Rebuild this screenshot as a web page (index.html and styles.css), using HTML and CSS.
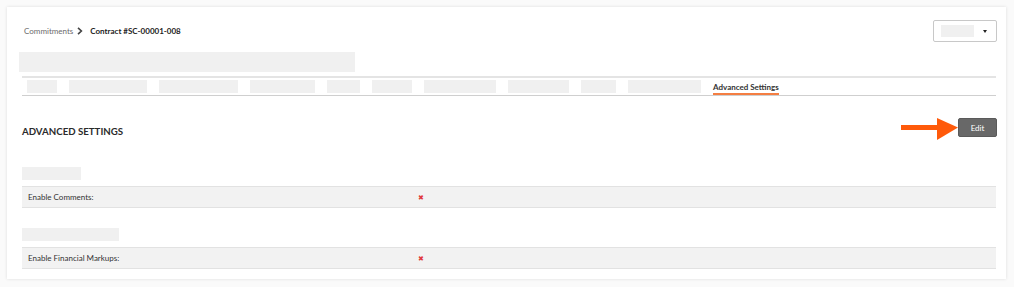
FILE: index.html
```html
<!DOCTYPE html>
<html lang="en">
<head>
    <meta charset="UTF-8">
    <title>Contract #SC-00001-008 - Advanced Settings</title>
    <link rel="stylesheet" href="styles.css">
</head>
<body>
    <div class="card">
        <div class="top-row">
            <div class="breadcrumb">
                <span class="crumb">Commitments</span>
                <svg class="crumb-sep" width="6" height="8" viewBox="0 0 6 8">
                    <path d="M1 0.8 L4.4 4 L1 7.2" fill="none" stroke="#444" stroke-width="1.6"/>
                </svg>
                <span class="crumb current">Contract #SC-00001-008</span>
            </div>
            <div class="dropdown">
                <span class="ph dropdown-ph"></span>
                <span class="caret"></span>
            </div>
        </div>

        <div class="ph title-ph"></div>

        <div class="tabs">
            <span class="ph tab-ph" style="width: 30px"></span>
            <span class="ph tab-ph" style="width: 78px"></span>
            <span class="ph tab-ph" style="width: 79px"></span>
            <span class="ph tab-ph" style="width: 65px"></span>
            <span class="ph tab-ph" style="width: 33px"></span>
            <span class="ph tab-ph" style="width: 40px"></span>
            <span class="ph tab-ph" style="width: 72px"></span>
            <span class="ph tab-ph" style="width: 61px"></span>
            <span class="ph tab-ph" style="width: 35px"></span>
            <span class="ph tab-ph" style="width: 73px"></span>
            <span class="tab active">Advanced Settings</span>
        </div>

        <div class="section-head">
            <h2>Advanced Settings</h2>
            <button class="edit-btn">Edit</button>
            <svg class="arrow" width="58" height="24" viewBox="0 0 58 24">
                <rect x="0" y="8" width="38" height="5" fill="#ff5a0a"/>
                <polygon points="36,1 57,10.5 36,23" fill="#ff5a0a"/>
            </svg>
        </div>

        <div class="group">
            <div class="ph group-ph" style="width: 59px"></div>
            <div class="setting-row">
                <span class="setting-label">Enable Comments:</span>
                <span class="setting-value">&#10006;</span>
            </div>
        </div>

        <div class="group">
            <div class="ph group-ph" style="width: 97px"></div>
            <div class="setting-row">
                <span class="setting-label">Enable Financial Markups:</span>
                <span class="setting-value">&#10006;</span>
            </div>
        </div>
    </div>
</body>
</html>
```

FILE: styles.css
```css
body {
    margin: 0;
    padding: 7px;
    background-color: #fafafa;
    font-family: Lato, "Open Sans", sans-serif;
    color: #333;
}

.card {
    position: relative;
    background-color: white;
    box-shadow: 0 0 3px rgba(0, 0, 0, 0.12);
    width: 999px;
    box-sizing: border-box;
    padding: 13px 10px 10px 15px;
}

.ph {
    display: block;
    background-color: #f0f0f0;
}

.top-row {
    display: flex;
    justify-content: space-between;
    align-items: center;
    height: 22px;
}

.breadcrumb {
    display: flex;
    align-items: center;
    padding-left: 2px;
    font-size: 8px;
}

.crumb {
    color: #6b6b6b;
}

.crumb-sep {
    margin: 0 7px 0 4px;
}

.crumb.current {
    color: #222;
    font-weight: bold;
}

.dropdown {
    display: flex;
    align-items: center;
    width: 64px;
    height: 22px;
    box-sizing: border-box;
    border: 1px solid #c8c8c8;
    border-radius: 2px;
    padding-left: 7px;
    margin-right: -1px;
}

.dropdown-ph {
    width: 33px;
    height: 12px;
}

.caret {
    width: 0;
    height: 0;
    margin-left: 9px;
    border-left: 2.5px solid transparent;
    border-right: 2.5px solid transparent;
    border-top: 3px solid #222;
}

.title-ph {
    width: 336px;
    height: 20px;
    margin: 10px 0 0 -3px;
}

.tabs {
    display: flex;
    align-items: center;
    gap: 12px;
    height: 17px;
    margin-top: 4px;
    padding-left: 5px;
    border-top: 2px solid #e4e4e4;
    border-bottom: 1px solid #cfcfcf;
}

.tab-ph {
    height: 13px;
}

.tab {
    position: relative;
    font-size: 8px;
    font-weight: bold;
    color: #333;
    align-self: stretch;
    display: flex;
    align-items: center;
}

.tab.active::after {
    content: "";
    position: absolute;
    left: 0;
    right: 0;
    bottom: 0;
    height: 2px;
    background-color: #f47e42;
}

.section-head {
    position: relative;
    display: flex;
    justify-content: space-between;
    align-items: center;
    margin-top: 22px;
    height: 19px;
}

.section-head h2 {
    margin: 0;
    padding-top: 7px;
    font-size: 9.7px;
    font-weight: bold;
    text-transform: uppercase;
    color: #2b2b2b;
}

.edit-btn {
    width: 39px;
    height: 19px;
    margin-right: -1px;
    padding: 0;
    border: 1px solid #5a5a5a;
    border-radius: 2px;
    background-color: #686868;
    color: white;
    font-family: Lato, sans-serif;
    font-size: 8px;
}

.arrow {
    position: absolute;
    left: 879px;
    top: -1px;
}

.group {
    margin-top: 30px;
}

.group + .group {
    margin-top: 20px;
}

.group-ph {
    height: 13px;
}

.setting-row {
    display: flex;
    align-items: center;
    height: 20px;
    margin-top: 6px;
    padding-left: 6px;
    background-color: #f2f2f2;
    border-top: 1px solid #e2e2e2;
    border-bottom: 1px solid #e2e2e2;
    font-size: 8px;
    color: #333;
}

.setting-label {
    width: 390px;
}

.setting-value {
    color: #e03a3a;
    font-size: 7px;
}
```
